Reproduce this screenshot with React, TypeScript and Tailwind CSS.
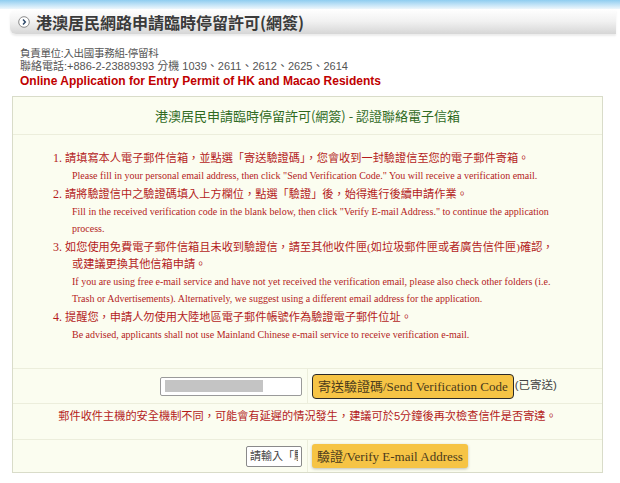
const zhFont = "font-['Liberation_Serif','Noto_Sans_CJK_TC',serif]"
const enFont = "font-['Liberation_Serif',serif]"

const items = [
  {
    n: '1.',
    zh: ['請填寫本人電子郵件信箱，並點選「寄送驗證碼」，您會收到一封驗證信至您的電子郵件寄箱。'],
    en: [
      'Please fill in your personal email address, then click "Send Verification Code." You will receive a verification email.',
    ],
  },
  {
    n: '2.',
    zh: ['請將驗證信中之驗證碼填入上方欄位，點選「驗證」後，始得進行後續申請作業。'],
    en: [
      'Fill in the received verification code in the blank below, then click "Verify E-mail Address." to continue the application',
      'process.',
    ],
  },
  {
    n: '3.',
    zh: [
      '如您使用免費電子郵件信箱且未收到驗證信，請至其他收件匣(如垃圾郵件匣或者廣告信件匣)確認，',
      '或建議更換其他信箱申請。',
    ],
    en: [
      'If you are using free e-mail service and have not yet received the verification email, please also check other folders (i.e.',
      'Trash or Advertisements). Alternatively, we suggest using a different email address for the application.',
    ],
  },
  {
    n: '4.',
    zh: ['提醒您，申請人勿使用大陸地區電子郵件帳號作為驗證電子郵件位址。'],
    en: ['Be advised, applicants shall not use Mainland Chinese e-mail service to receive verification e-mail.'],
  },
]

const ChevronIcon = () => (
  <svg width="12" height="12" viewBox="0 0 12 12" className="shrink-0">
    <circle cx="6" cy="6" r="5.3" fill="#fff" stroke="#8a8a8a" strokeWidth="1" />
    <path d="M5 3.6 L7.3 6 L5 8.4" fill="none" stroke="#2f4a6a" strokeWidth="1.5" />
  </svg>
)

export default function App() {
  return (
    <div className="w-[620px] h-[483px] bg-white overflow-hidden font-['Liberation_Sans','Noto_Sans_CJK_TC',sans-serif]">
      <div className="h-[9px] bg-gradient-to-b from-[#8fcdf0] to-[#eef7fc]" />

      <div className="pl-[10px] pr-[4px]">
        <div className="h-[25px] flex items-center gap-[6px] pl-[8px] rounded-l-[6px] bg-gradient-to-b from-white via-[#f1f1f1] to-[#d6d6d6] shadow-[0_2px_2px_rgba(0,0,0,0.08)]">
          <ChevronIcon />
          <span className="text-[16px] font-bold text-[#3a3a3a] font-['Noto_Sans_CJK_TC',sans-serif] leading-none">
            港澳居民網路申請臨時停留許可(網簽)
          </span>
        </div>
      </div>

      <div className="pl-[20px] pt-[13px] text-[11px] text-[#555] leading-[13px]">
        <p className="text-[10.5px] tracking-[-0.3px]">負責單位:入出國事務組-停留科</p>
        <p>聯絡電話:+886-2-23889393 分機 1039、2611、2612、2625、2614</p>
        <p className="mt-[1px] text-[12px] leading-[15px] font-bold text-[#c00000]">
          Online Application for Entry Permit of HK and Macao Residents
        </p>
      </div>

      <div className="ml-[12px] mt-[7px] w-[591px] h-[377px] border border-[#d9dcc9] bg-[#fbfdf0] flex flex-col">
        <div className="h-[38px] shrink-0 flex items-center justify-center border-b border-[#eceedc] text-[13px] text-[#2f6a1e] font-['Noto_Sans_CJK_TC',sans-serif]">
          港澳居民申請臨時停留許可(網簽) - 認證聯絡電子信箱
        </div>

        <div className="pl-[40px] pt-[15px] pb-[23px] text-[#b41c1c] border-b border-[#eceedc]">
          {items.map((it) => (
            <div key={it.n} className="mb-[2px]">
              {it.zh.map((line, i) => (
                <div
                  key={'z' + i}
                  className={`${zhFont} text-[11.2px] leading-[17px] whitespace-nowrap ${i === 0 ? '' : 'pl-[19px]'}`}
                >
                  {i === 0 && <span className={`${enFont} inline-block w-[12px] text-[12px]`}>{it.n}</span>}
                  {line}
                </div>
              ))}
              {it.en.map((line, i) => (
                <div key={'e' + i} className={`${enFont} pl-[19px] text-[10px] leading-[17px] whitespace-nowrap`}>
                  {line}
                </div>
              ))}
            </div>
          ))}
        </div>

        <div className="h-[35px] shrink-0 flex border-b border-[#eceedc]">
          <div className="w-[295px] flex items-center justify-end pr-[5px] border-r border-[#eceedc]">
            <div className="w-[142px] h-[19px] border border-[#9a9a9a] bg-white rounded-[2px] flex items-center pl-[4px]">
              <div className="w-[98px] h-[12px] bg-[#c4c4c4]" />
            </div>
          </div>
          <div className="flex items-center pl-[4px]">
            <button className="h-[25px] px-[5px] rounded-[4px] border-[1.5px] border-[#2a2a2a] bg-[#f6c445] text-[13px] text-[#4a3a1c] whitespace-nowrap font-['Liberation_Serif','Noto_Sans_CJK_TC',serif] leading-none">
              寄送驗證碼/Send Verification Code
            </button>
            <span className="ml-[1px] text-[11.5px] text-[#444]">(已寄送)</span>
          </div>
        </div>

        <div className="h-[36px] shrink-0 pt-[5px] text-center border-b border-[#eceedc] text-[#b41c1c] text-[11.2px] leading-[14px] font-['Liberation_Sans','Noto_Sans_CJK_TC',sans-serif]">
          郵件收件主機的安全機制不同，可能會有延遲的情況發生，建議可於5分鐘後再次檢查信件是否寄達。
        </div>

        <div className="flex-1 flex">
          <div className="w-[295px] flex items-center justify-end pr-[5px] border-r border-[#eceedc]">
            <input
              readOnly
              placeholder="請輸入「驗證碼」"
              className="w-[56px] h-[21px] border border-[#8a8a8a] bg-white rounded-[2px] px-[3px] text-[11px] text-[#444] placeholder:text-[#444] outline-none"
            />
          </div>
          <div className="flex items-center pl-[4px]">
            <button className="h-[24px] px-[5px] rounded-[3px] bg-[#f6c445] shadow-[0_1px_3px_rgba(0,0,0,0.25)] text-[13px] text-[#4a3a1c] whitespace-nowrap font-['Liberation_Serif','Noto_Sans_CJK_TC',serif] leading-none">
              驗證/Verify E-mail Address
            </button>
          </div>
        </div>
      </div>
    </div>
  )
}
